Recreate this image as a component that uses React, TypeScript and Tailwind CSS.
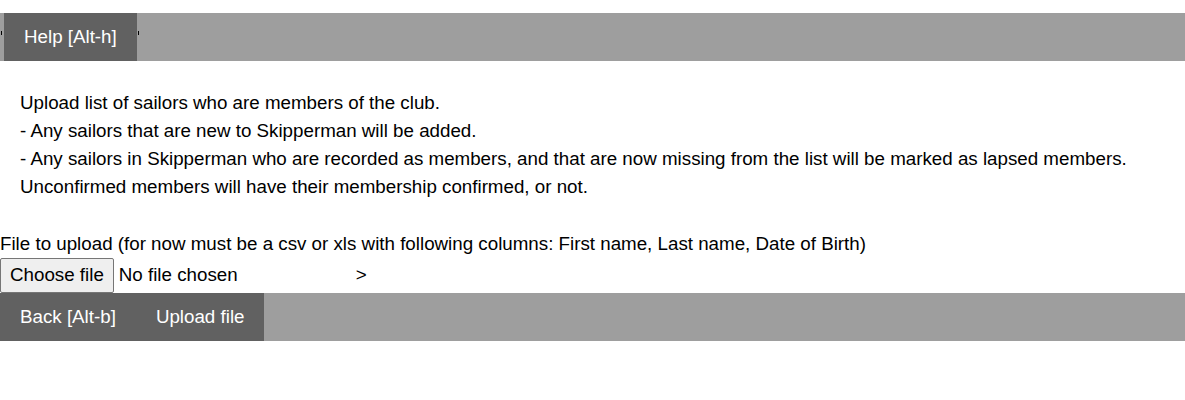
export default function App() {
  const lines = [
    "Upload list of sailors who are members of the club.",
    "- Any sailors that are new to Skipperman will be added.",
    "- Any sailors in Skipperman who are recorded as members, and that are now missing from the list will be marked as lapsed members.",
    "Unconfirmed members will have their membership confirmed, or not.",
  ];

  return (
    <div className="bg-white text-black text-[18.75px] font-['Liberation_Sans',Arial,sans-serif] pt-[13px]">
      {/* top nav */}
      <div className="flex items-center h-[48px] bg-[#9e9e9e]">
        <span className="w-px h-1 bg-black ml-px mb-2" />
        <button className="h-full px-5 ml-[2px] bg-[#616161] text-white">Help [Alt-h]</button>
        <span className="w-px h-1 bg-black ml-px mb-2" />
      </div>

      <div className="px-5 pt-[28px] pb-[28px] leading-[28px]">
        {lines.map((l) => (
          <div key={l}>{l}</div>
        ))}
      </div>

      <div className="mt-[4px] leading-[21px]">
        File to upload (for now must be a csv or xls with following columns: First name, Last name, Date of Birth)
      </div>
      <div className="flex items-center h-[35px] mt-[4px]">
        <button className="h-[35px] px-[9px] bg-[#efefef] border border-[#767676] rounded-[2px] text-black">
          Choose file
        </button>
        <span className="ml-[5px]">No file chosen</span>
        <span className="ml-[118px]">&gt;</span>
      </div>

      {/* bottom nav */}
      <div className="flex h-[48px] bg-[#9e9e9e]">
        <div className="flex bg-[#616161] text-white">
          <button className="px-5 h-full">Back [Alt-b]</button>
          <button className="px-5 h-full">Upload file</button>
        </div>
      </div>
    </div>
  );
}
